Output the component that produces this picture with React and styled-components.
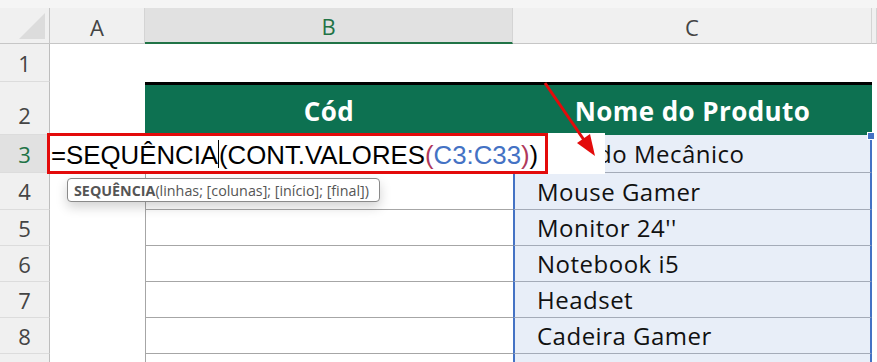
import React from "react";
import styled, { createGlobalStyle } from "styled-components";

const GlobalStyle = createGlobalStyle`
  html, body { margin: 0; padding: 0; background: #ffffff; }
  body { width: 877px; height: 362px; overflow: hidden; font-family: "Open Sans", "Liberation Sans", sans-serif; }
`;

const Sheet = styled.div`
  position: relative;
  display: grid;
  grid-template-columns: 50px 95px 368px 359px 5px;
  grid-template-rows: 8px 36px 38px 53px 38px 37px repeat(5, 36px);
  width: 877px;
  height: 362px;
  overflow: hidden;
  background: #ffffff;
`;

const TopStrip = styled.div`
  grid-column: 1 / -1;
  background: #f5f5f5;
`;

const Corner = styled.div`
  position: relative;
  background: #f0f0f0;
  border-right: 1px solid #c6c6c6;
  border-bottom: 1px solid #c6c6c6;
  box-sizing: border-box;
  &::after {
    content: "";
    position: absolute;
    right: 4px;
    bottom: 4px;
    border-style: solid;
    border-width: 0 0 26px 26px;
    border-color: transparent transparent #dcdcdc transparent;
  }
`;

const ColHead = styled.div`
  display: flex;
  align-items: center;
  justify-content: center;
  box-sizing: border-box;
  background: ${(p) => (p.$selected ? "#e1e1e1" : "#f0f0f0")};
  color: ${(p) => (p.$selected ? "#217346" : "#444444")};
  border-right: 1px solid #d4d4d4;
  border-bottom: ${(p) => (p.$selected ? "2px solid #217346" : "1px solid #c6c6c6")};
  font-size: 22px;
  padding-top: 2px;
`;

const RowHead = styled.div`
  display: flex;
  align-items: center;
  justify-content: center;
  box-sizing: border-box;
  background: ${(p) => (p.$active ? "#e1e1e1" : "#f0f0f0")};
  color: ${(p) => (p.$active ? "#217346" : "#444444")};
  border-right: 1px solid #bdbdbd;
  border-bottom: 1px solid #dcdcdc;
  font-size: 22px;
  padding-top: ${(p) => (p.$tall ? "14px" : "0")};
`;

const CellA = styled.div`
  background: #ffffff;
`;

const CellB = styled.div`
  box-sizing: border-box;
  background: #ffffff;
  border-left: 1px solid #a6a6a6;
  border-bottom: 1px solid #a6a6a6;
`;

const BlankCell = styled.div`
  background: #ffffff;
`;

const TitleCell = styled.div`
  display: flex;
  align-items: center;
  justify-content: center;
  box-sizing: border-box;
  background: #0d7151;
  border-top: 3px solid #000000;
  color: #ffffff;
  font-weight: 700;
  font-size: 26px;
  letter-spacing: 0.4px;
  padding-top: 2px;
`;

const CellC = styled.div`
  display: flex;
  align-items: center;
  box-sizing: border-box;
  background: #e8eef8;
  border-left: 2px solid #4472c4;
  border-right: 2px solid #4472c4;
  border-bottom: 1px solid #a4abb8;
  padding-left: 22px;
  font-size: 24px;
  letter-spacing: 0.5px;
  color: #111111;
  white-space: nowrap;
`;

const Editor = styled.div`
  position: absolute;
  left: 47px;
  top: 133px;
  width: 558px;
  height: 41px;
  display: flex;
  background: #ffffff;
`;

const FormulaBox = styled.div`
  box-sizing: border-box;
  width: 501px;
  height: 41px;
  border: 3px solid #e30b0b;
  display: flex;
  align-items: center;
  padding-left: 1px;
  padding-top: 3px;
  font-family: "Liberation Sans", Arial, sans-serif;
  font-size: 25.8px;
  color: #000000;
  white-space: nowrap;
`;

const Caret = styled.span`
  display: inline-block;
  width: 1px;
  height: 28px;
  margin-top: -3px;
  background: #000000;
`;

const Tok = styled.span`
  color: ${(p) => p.$color || "#000000"};
`;

const Tip = styled.div`
  position: absolute;
  left: 67px;
  top: 178px;
  width: 313px;
  height: 24px;
  box-sizing: border-box;
  border: 1px solid #8a8a8a;
  border-radius: 4px;
  background: #ffffff;
  box-shadow: 0 5px 12px rgba(0, 0, 0, 0.18);
  display: flex;
  align-items: center;
  padding-left: 6px;
  font-size: 14.3px;
  color: #555555;
  white-space: nowrap;
`;

const TipName = styled.b`
  font-weight: 700;
  color: #555555;
`;

const Handle = styled.div`
  position: absolute;
  left: 867px;
  top: 132px;
  width: 6px;
  height: 6px;
  background: #4472c4;
  border: 1px solid #ffffff;
`;

const Arrow = styled.svg`
  position: absolute;
  left: 0;
  top: 0;
  pointer-events: none;
`;

const products = [
  "Teclado Mecânico",
  "Mouse Gamer",
  "Monitor 24''",
  "Notebook i5",
  "Headset",
  "Cadeira Gamer",
  "",
];

export default function App() {
  return (
    <>
      <GlobalStyle />
      <Sheet>
        <TopStrip />

        <Corner />
        <ColHead>A</ColHead>
        <ColHead $selected>B</ColHead>
        <ColHead>C</ColHead>
        <ColHead />

        <RowHead>1</RowHead>
        <CellA />
        <BlankCell />
        <BlankCell />
        <BlankCell />

        <RowHead $tall>2</RowHead>
        <CellA />
        <TitleCell>Cód</TitleCell>
        <TitleCell>Nome do Produto</TitleCell>
        <BlankCell />

        {products.map((name, i) => (
          <React.Fragment key={i}>
            <RowHead $active={i === 0}>{i < 6 ? i + 3 : ""}</RowHead>
            <CellA />
            <CellB />
            <CellC>{name}</CellC>
            <BlankCell />
          </React.Fragment>
        ))}

        <Editor>
          <FormulaBox>
            =SEQUÊNCIA<Caret />(CONT.VALORES<Tok $color="#b0385a">(</Tok>
            <Tok $color="#4472c4">C3:C33</Tok>
            <Tok $color="#b0385a">)</Tok>)
          </FormulaBox>
        </Editor>

        <Tip>
          <TipName>SEQUÊNCIA</TipName>(linhas; [colunas]; [início]; [final])
        </Tip>

        <Handle />

        <Arrow width="877" height="362" viewBox="0 0 877 362">
          <line x1="545" y1="83" x2="584" y2="140" stroke="#e30b0b" strokeWidth="3" />
          <polygon points="595,156 577,143 590,134" fill="#e30b0b" />
        </Arrow>
      </Sheet>
    </>
  );
}
